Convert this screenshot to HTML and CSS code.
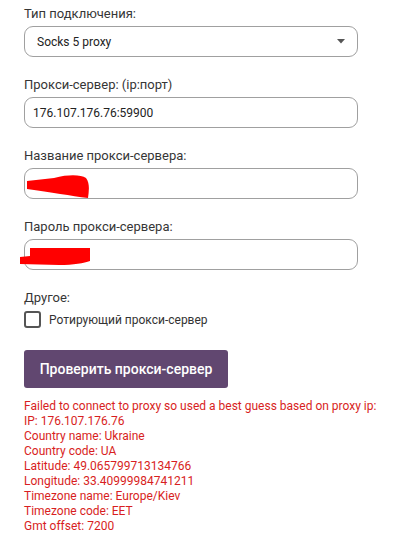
FILE: index.html
```html
<!DOCTYPE html>
<html lang="ru">
<head>
<meta charset="utf-8">
<link rel="stylesheet" href="styles.css">
</head>
<body>
<div class="form">
  <div class="field">
    <div class="label">Тип подключения:</div>
    <div class="box select">
      <span>Socks 5 proxy</span>
      <svg class="arrow" width="8" height="5" viewBox="0 0 8 5"><path d="M0 0h8L4 4.5z" fill="#555"/></svg>
    </div>
  </div>
  <div class="field">
    <div class="label">Прокси-сервер: (ip:порт)</div>
    <div class="box input">176.107.176.76:59900</div>
  </div>
  <div class="field">
    <div class="label">Название прокси-сервера:</div>
    <div class="box input">
      <svg class="scribble s1" width="64" height="24" viewBox="0 0 64 24"><path d="M1 6 L28 3 C44 -1, 55 0, 60 3 C64 8, 63 16, 62 23 C45 21, 25 17, 1 14 Z" fill="#ff0000"/></svg>
    </div>
  </div>
  <div class="field">
    <div class="label">Пароль прокси-сервера:</div>
    <div class="box input">
      <svg class="scribble s2" width="72" height="19" viewBox="0 0 72 19"><path d="M11 1 L71 1 L71 14 C65 16, 55 18, 40 18 L1 17 L1 10 L11 9 Z" fill="#ff0000"/></svg>
    </div>
  </div>
  <div class="other">
    <div class="label">Другое:</div>
    <label class="check"><span class="cb"></span>Ротирующий прокси-сервер</label>
  </div>
  <button class="btn">Проверить прокси-сервер</button>
  <div class="result">Failed to connect to proxy so used a best guess based on proxy ip:<br>IP: 176.107.176.76<br>Country name: Ukraine<br>Country code: UA<br>Latitude: 49.065799713134766<br>Longitude: 33.40999984741211<br>Timezone name: Europe/Kiev<br>Timezone code: EET<br>Gmt offset: 7200</div>
</div>
</body>
</html>
```
FILE: styles.css
```css
* { box-sizing: border-box; }
body {
  margin: 0;
  background: #fff;
  font-family: Roboto, "Noto Sans", sans-serif;
  color: #333;
}
.form {
  padding: 6px 0 0 24px;
  display: flex;
  flex-direction: column;
}
.field { display: flex; flex-direction: column; margin-bottom: 20px; }
.label {
  font-size: 13px;
  line-height: 16px;
  color: #363636;
  margin-bottom: 4px;
}
.box {
  width: 334px;
  height: 31px;
  border: 1px solid #a0a0a0;
  border-radius: 9px;
  font-size: 12px;
  color: #222;
  display: flex;
  align-items: center;
  position: relative;
}
.select { padding: 0 0 0 12px; justify-content: space-between; }
.select .arrow { margin-right: 12px; }
.input { padding-left: 8px; }
.scribble { position: absolute; }
.s1 { left: 1px; top: 6px; }
.s2 { left: -6px; top: 7px; }
.other { display: flex; flex-direction: column; }
.other .label { margin-bottom: 5px; }
.check {
  display: flex;
  align-items: center;
  font-size: 12px;
  color: #333;
}
.cb {
  width: 17px;
  height: 17px;
  border: 2px solid #555;
  border-radius: 3px;
  margin-right: 8px;
}
.btn {
  align-self: flex-start;
  margin-top: 22px;
  width: 204px;
  height: 38px;
  background: #614770;
  color: #fff;
  border: none;
  border-radius: 3px;
  font-family: Roboto, sans-serif;
  font-size: 14px;
  font-weight: 500;
  padding: 0;
}
.result {
  margin-top: 11px;
  font-size: 12px;
  line-height: 15px;
  color: #d81e22;
}
```
